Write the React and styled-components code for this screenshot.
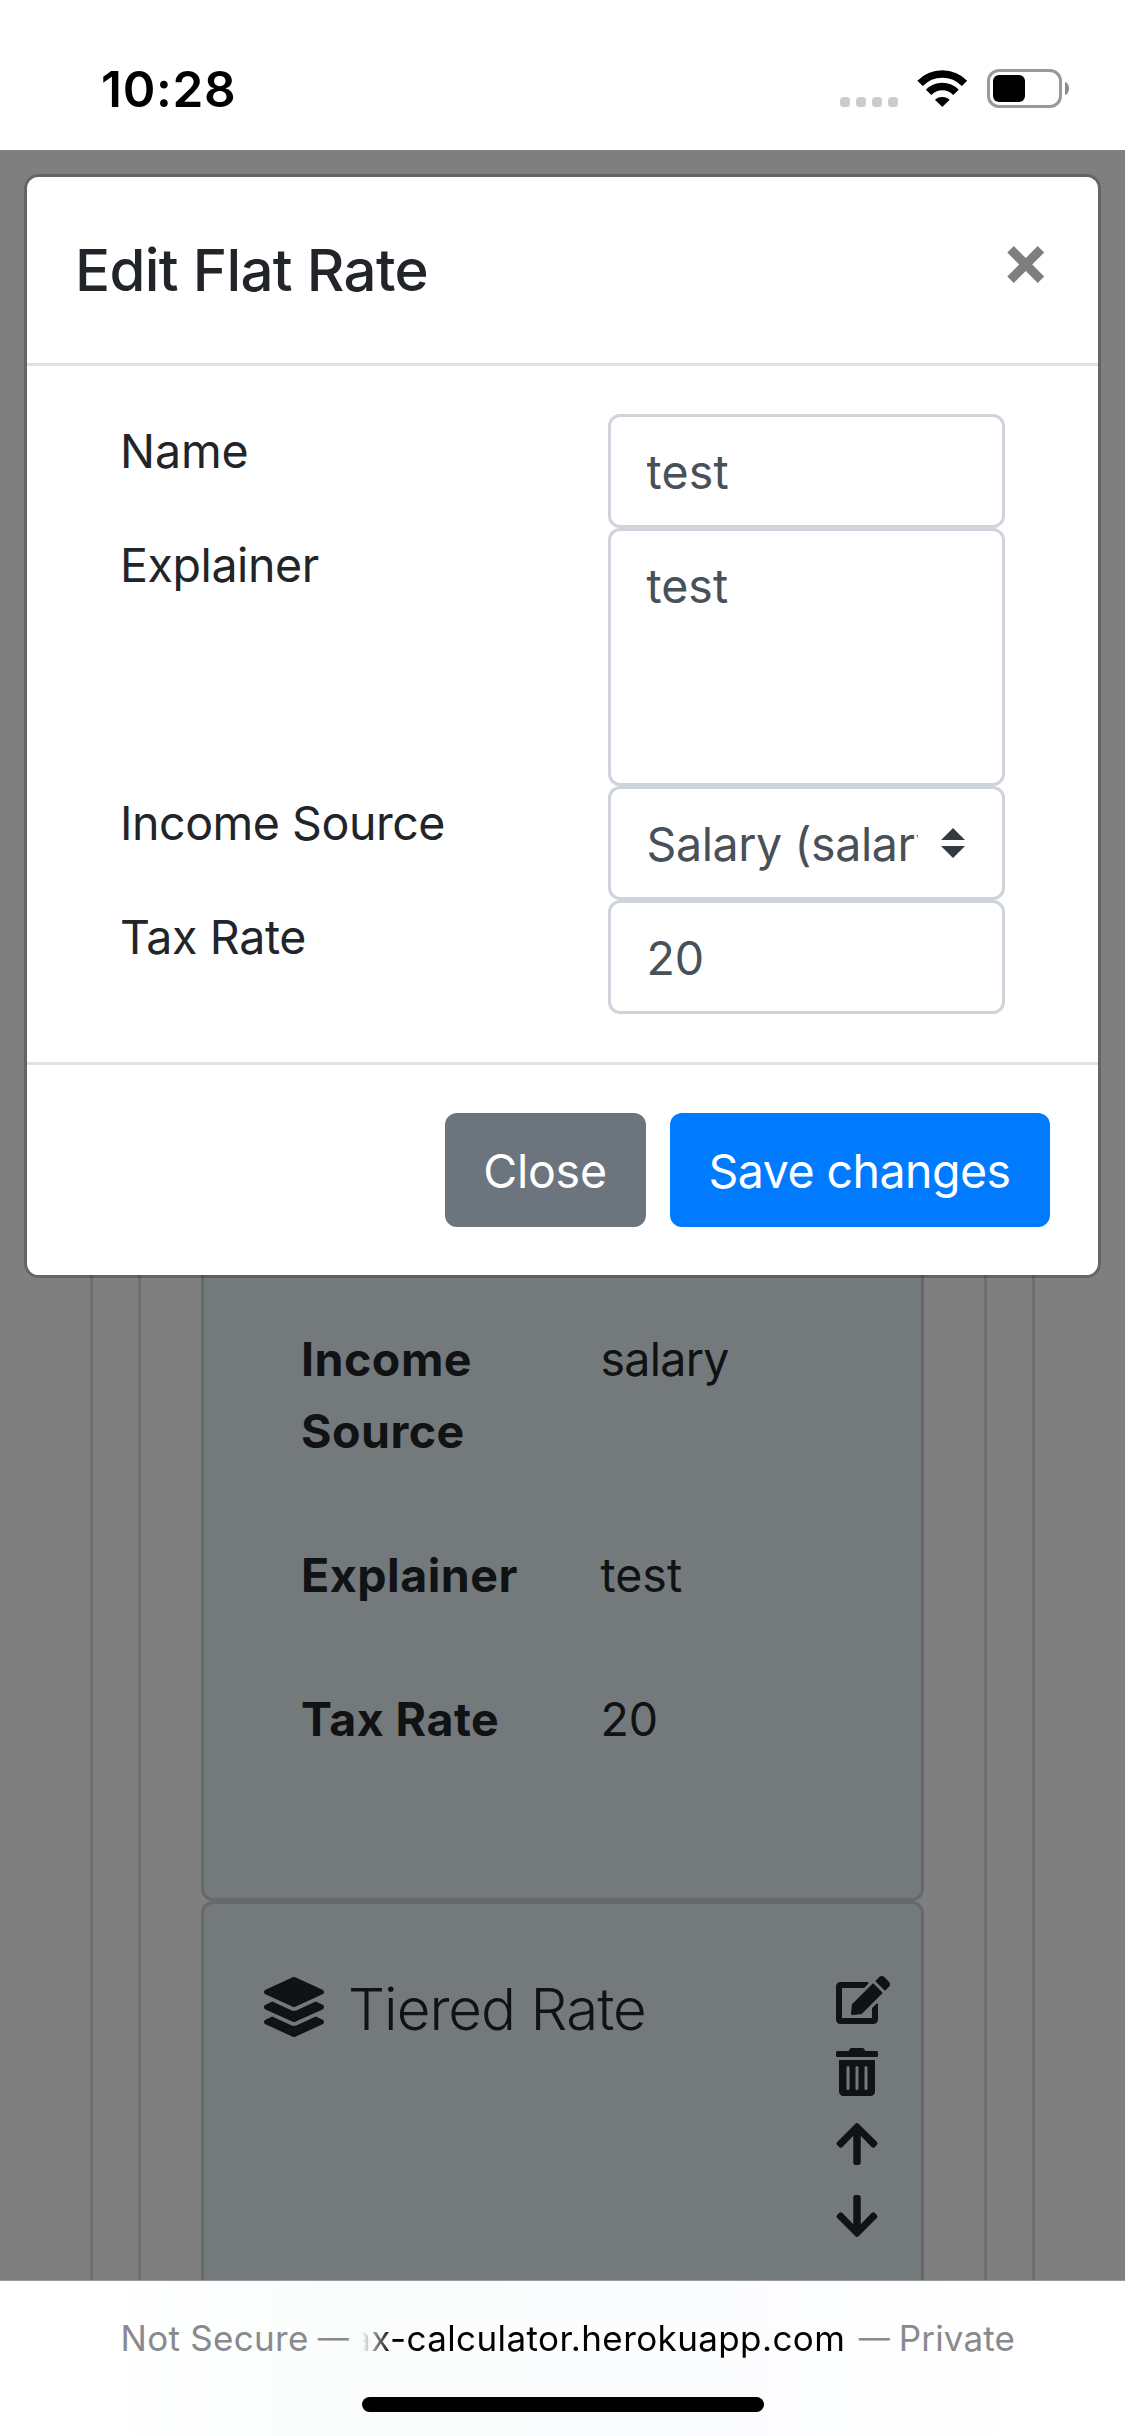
import React from "react";
import styled, { createGlobalStyle } from "styled-components";
import { FaLayerGroup, FaEdit, FaTrashAlt, FaArrowUp, FaArrowDown } from "react-icons/fa";

const GlobalStyle = createGlobalStyle`
  *, *::before, *::after { box-sizing: border-box; }
  body {
    margin: 0;
    background: #fff;
    color: #212529;
    font-family: Inter, "Liberation Sans", sans-serif;
    font-size: 46.5px;
    line-height: 72px;
  }
  svg { display: block; }
`;

const Screen = styled.div`
  width: 1125px;
  height: 2436px;
  display: flex;
  flex-direction: column;
  overflow: hidden;
`;

const Text = styled.span`
  letter-spacing: ${(p) => p.$track || 0}px;
  white-space: nowrap;
`;

/* Status bar */

const StatusBar = styled.header`
  height: 150px;
  flex: none;
  display: flex;
  justify-content: space-between;
  padding: 53px 56px 0 101px;
`;

const Clock = styled.time`
  color: #000;
  font-size: 49.5px;
  font-weight: 600;
  letter-spacing: 0.7px;
`;

const StatusIcons = styled.div`
  display: flex;
  align-items: flex-start;
  height: 40px;
  padding-top: 16px;
`;

const SignalDots = styled.div`
  display: flex;
  gap: 6px;
  margin: 28px 19px 0 0;
`;

const Dot = styled.i`
  width: 10px;
  height: 10px;
  border-radius: 3.5px;
  background: #cbcbcb;
`;

const WifiIcon = styled.svg`
  margin: 1px 19px 0 0;
`;

const Battery = styled.div`
  width: 75px;
  height: 39px;
  padding: 3px;
  border: 3px solid #999;
  border-radius: 12px;
`;

const BatteryLevel = styled.div`
  width: 32px;
  height: 27px;
  border-radius: 6px;
  background: #000;
`;

const BatteryCap = styled.div`
  width: 4px;
  height: 13px;
  margin: 13px 0 0 3px;
  border-radius: 0 4px 4px 0 / 0 6.5px 6.5px 0;
  background: #8c8c8c;
`;

/* Page behind the dialog */

const Viewport = styled.main`
  position: relative;
  height: 2130px;
  flex: none;
  overflow: hidden;
`;

const PageContent = styled.div`
  height: 100%;
  padding: 60px 90px 0;
`;

const Frame = styled.section`
  height: 2200px;
  padding: 45px 45px 0;
  border: 3px solid rgba(0, 0, 0, 0.125);
  border-radius: 12px;
`;

const InnerFrame = styled(Frame)`
  padding: 60px 60px 0;
`;

const RateCard = styled.article`
  display: flex;
  background: #e8f2f6;
  border: 3px solid rgba(0, 0, 0, 0.125);
  border-radius: 12px;
`;

const DetailsCard = styled(RateCard)`
  height: 1580px;
  flex-direction: column;
  justify-content: flex-end;
  gap: 72px;
  padding: 0 96px 143px 97px;
`;

const DetailRow = styled.div`
  display: grid;
  grid-template-columns: 299.5px 1fr;
`;

const DetailName = styled.div`
  padding-right: ${(p) => (p.$narrow ? 90 : 0)}px;
  font-weight: 700;
  letter-spacing: 0.5px;
`;

const DetailValue = styled.div`
  letter-spacing: ${(p) => p.$track || 0}px;
`;

const TitledCard = styled(RateCard)`
  height: 600px;
  justify-content: space-between;
  padding: 60px 31px 0 60px;
`;

const CardTitle = styled.h5`
  display: flex;
  gap: 24px;
  height: 72px;
  margin: 9px 0 0;
  font-size: 58.2px;
  font-weight: 300;
  letter-spacing: -0.97px;
  & > svg { margin-top: 4px; }
`;

const Tools = styled.div`
  display: flex;
  flex-direction: column;
  align-items: flex-start;
  flex: none;
  gap: 24px;
  width: 54px;
  padding-top: 12px;
  & > svg {
    flex: none;
    width: 42px;
    height: 48px;
  }
  & > svg:first-child { width: 54px; }
`;

/* Dialog */

const Backdrop = styled.div`
  position: absolute;
  inset: 0;
  padding: 24px;
  background: rgba(0, 0, 0, 0.5);
`;

const Modal = styled.div`
  background: #fff;
  background-clip: padding-box;
  border: 3px solid rgba(0, 0, 0, 0.2);
  border-radius: 14.4px;
`;

const ModalHeader = styled.div`
  display: flex;
  justify-content: space-between;
  align-items: flex-start;
  height: 189px;
  padding: 48px;
  border-bottom: 3px solid #dee2e6;
`;

const ModalTitle = styled.h5`
  margin: 0;
  font-size: 58.2px;
  font-weight: 500;
  line-height: 90px;
  letter-spacing: -0.65px;
`;

const DismissButton = styled.button`
  margin: -2px 0 0;
  padding: 0;
  border: 0;
  background: none;
  color: #000;
  opacity: 0.5;
  font: 700 72px/72px Inter, "Liberation Sans", sans-serif;
`;

const Form = styled.form`
  padding: 48px 93px;
`;

const Field = styled.label`
  display: grid;
  grid-template-columns: 1fr 397.5px;
  & > span { padding-top: 1px; }
`;

const control = `
  display: block;
  width: 100%;
  margin: 0;
  padding: 19px 36px 17px;
  border: 3px solid #ced4da;
  border-radius: 12px;
  background-color: #fff;
  color: #495057;
  font: 400 46.5px/72px Inter, "Liberation Sans", sans-serif;
  outline: none;
`;

const TextInput = styled.input`
  ${control}
  height: 114px;
  letter-spacing: ${(p) => p.$track || 0}px;
`;

const TextArea = styled.textarea`
  ${control}
  height: 258px;
  resize: none;
  overflow: hidden;
`;

const SelectBox = styled.div`
  ${control}
  display: flex;
  justify-content: space-between;
  height: 114px;
  & > svg { margin: 20px 1px 0 0; }
`;

const SelectValue = styled.span`
  width: 271px;
  overflow: hidden;
  white-space: nowrap;
  letter-spacing: -0.39px;
`;

const ModalFooter = styled.div`
  display: flex;
  justify-content: flex-end;
  gap: 24px;
  padding: 48px;
  border-top: 3px solid #dee2e6;
`;

const Button = styled.button`
  width: ${(p) => p.$width}px;
  height: 114px;
  padding: 2px 1px 0 0;
  border: 0;
  border-radius: 12px;
  background: ${(p) => (p.$primary ? "#007bff" : "#6c757d")};
  color: #fff;
  font: 400 46.5px/72px Inter, "Liberation Sans", sans-serif;
  letter-spacing: ${(p) => p.$track || 0}px;
  white-space: nowrap;
`;

/* Browser bar */

const BrowserBar = styled.footer`
  height: 156px;
  flex: none;
  display: flex;
  flex-direction: column;
  align-items: center;
  border-top: 1px solid #999;
  background: linear-gradient(90deg, #fff 8%, #fafcfc 32%, #fbfcfe 60%, #fff 94%);
`;

const AddressLine = styled.div`
  display: flex;
  justify-content: space-between;
  width: 100%;
  height: 42px;
  margin-top: 36px;
  padding: 0 110px 0 120.5px;
  color: #8a8a8e;
  font-size: 35px;
  line-height: 42px;
`;

const Note = styled.div`
  display: flex;
  gap: 10px;
`;

const Dash = styled.span`
  display: flex;
  justify-content: center;
  width: 29px;
  font-size: 31px;
`;

const Host = styled.div`
  display: flex;
  justify-content: flex-end;
  width: 483px;
  overflow: hidden;
  color: #000;
  -webkit-mask-image: linear-gradient(90deg, transparent, #000 30px);
  mask-image: linear-gradient(90deg, transparent, #000 30px);
`;

const HomeIndicator = styled.div`
  width: 402px;
  height: 15px;
  margin-top: 38px;
  border-radius: 8px;
  background: #000;
`;

function Status() {
  return (
    <StatusBar>
      <Clock>10:28</Clock>
      <StatusIcons>
        <SignalDots>
          <Dot /><Dot /><Dot /><Dot />
        </SignalDots>
        <WifiIcon width="51" height="38" viewBox="0 0 51 38" fill="none" stroke="#000" strokeWidth="7.5">
          <path d="M3.1 13.4A30.8 30.8 0 0 1 47.5 13.4" />
          <path d="M11.6 22.3A19 19 0 0 1 39 22.3" />
          <path d="M18.8 29.8A10.5 10.5 0 0 1 31.8 29.8L25.3 36Z" fill="#000" strokeWidth="1.2" strokeLinejoin="round" />
        </WifiIcon>
        <Battery><BatteryLevel /></Battery>
        <BatteryCap />
      </StatusIcons>
    </StatusBar>
  );
}

function EditDialog() {
  return (
    <Backdrop>
      <Modal role="dialog">
        <ModalHeader>
          <ModalTitle>Edit Flat Rate</ModalTitle>
          <DismissButton aria-label="Close">×</DismissButton>
        </ModalHeader>
        <Form>
          <Field>
            <Text $track={-0.1}>Name</Text>
            <TextInput defaultValue="test" $track={0.2} />
          </Field>
          <Field>
            <Text $track={-0.42}>Explainer</Text>
            <TextArea defaultValue="test" />
          </Field>
          <Field>
            <Text $track={-0.46}>Income Source</Text>
            <SelectBox>
              <SelectValue>Salary (salary)</SelectValue>
              <svg width="24" height="30" viewBox="0 0 4 5" fill="#343a40">
                <path d="M2 0L0 2h4zm0 5L0 3h4z" />
              </svg>
            </SelectBox>
          </Field>
          <Field>
            <Text $track={-0.34}>Tax Rate</Text>
            <TextInput defaultValue="20" />
          </Field>
        </Form>
        <ModalFooter>
          <Button type="button" $width={201} $track={-0.21}>Close</Button>
          <Button type="button" $primary $width={380} $track={-0.55}>Save changes</Button>
        </ModalFooter>
      </Modal>
    </Backdrop>
  );
}

export default function App() {
  return (
    <Screen>
      <GlobalStyle />
      <Status />
      <Viewport>
        <PageContent>
          <Frame>
            <InnerFrame>
              <DetailsCard>
                <DetailRow>
                  <DetailName $narrow>Income Source</DetailName>
                  <DetailValue $track={-0.69}>salary</DetailValue>
                </DetailRow>
                <DetailRow>
                  <DetailName>Explainer</DetailName>
                  <DetailValue>test</DetailValue>
                </DetailRow>
                <DetailRow>
                  <DetailName>Tax Rate</DetailName>
                  <DetailValue>20</DetailValue>
                </DetailRow>
              </DetailsCard>
              <TitledCard>
                <CardTitle>
                  <FaLayerGroup size={60} />
                  Tiered Rate
                </CardTitle>
                <Tools>
                  <FaEdit />
                  <FaTrashAlt />
                  <FaArrowUp />
                  <FaArrowDown />
                </Tools>
              </TitledCard>
            </InnerFrame>
          </Frame>
        </PageContent>
        <EditDialog />
      </Viewport>
      <BrowserBar>
        <AddressLine>
          <Note>
            <Text $track={0.3}>Not Secure</Text>
            <Dash>—</Dash>
          </Note>
          <Host><Text $track={0.4}>ax-calculator.herokuapp.com</Text></Host>
          <Note>
            <Dash>—</Dash>
            <Text $track={0.13}>Private</Text>
          </Note>
        </AddressLine>
        <HomeIndicator />
      </BrowserBar>
    </Screen>
  );
}
